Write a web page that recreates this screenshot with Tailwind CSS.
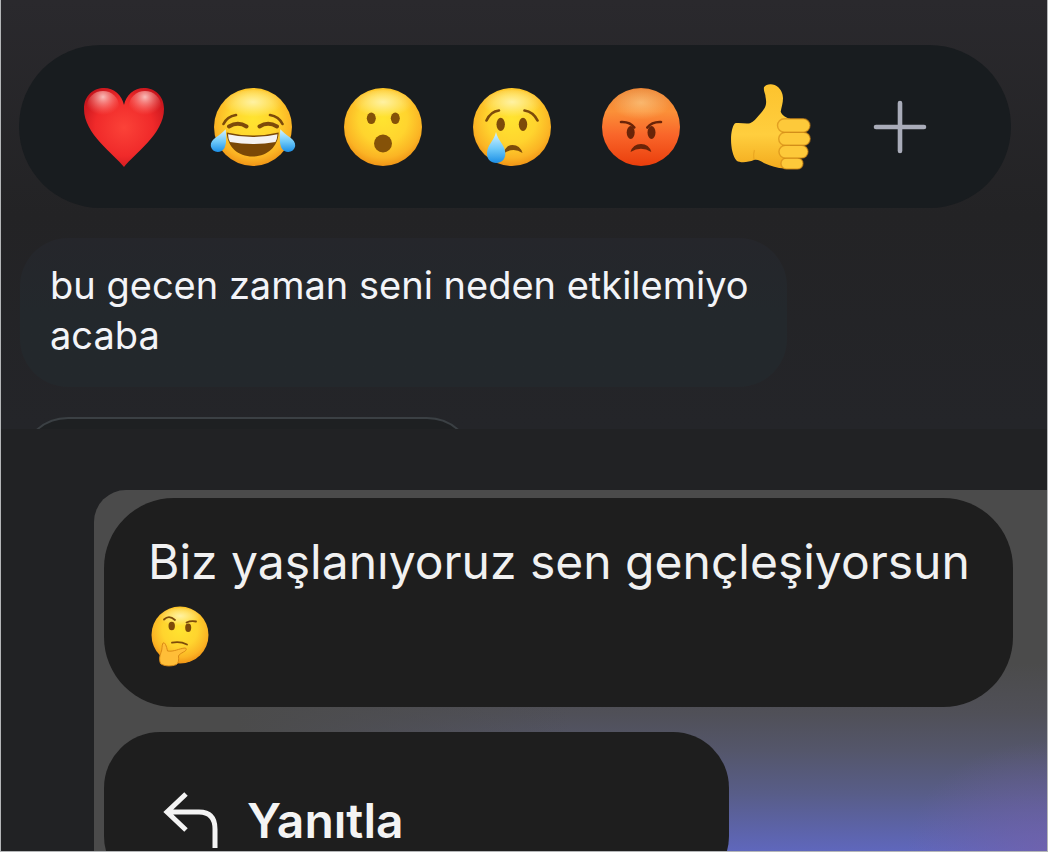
<!DOCTYPE html>
<html lang="tr">
<head>
  <meta charset="UTF-8" />
  <meta name="viewport" content="width=device-width, initial-scale=1" />
  <title>Mesajlar</title>
  <script src="https://cdn.jsdelivr.net/npm/@tailwindcss/browser@4"></script>
</head>
<body class="h-screen flex flex-col overflow-hidden border-x border-b border-[#b4b6b8] bg-[#212224] font-['Inter','Liberation_Sans',sans-serif]">

  <!-- Shared gradients -->
  <svg class="absolute w-0 h-0" aria-hidden="true">
    <defs>
      <radialGradient id="face" cx="0.5" cy="0.4" r="0.62">
        <stop offset="0" stop-color="#ffe430" />
        <stop offset="0.5" stop-color="#ffd42e" />
        <stop offset="0.8" stop-color="#fbb424" />
        <stop offset="1" stop-color="#ee8f14" />
      </radialGradient>
      <radialGradient id="shine" cx="0.5" cy="0.4" r="0.5">
        <stop offset="0" stop-color="#fff8c0" stop-opacity="0.8" />
        <stop offset="1" stop-color="#fff8c0" stop-opacity="0" />
      </radialGradient>
      <linearGradient id="rage" x1="0" y1="0" x2="0" y2="1">
        <stop offset="0" stop-color="#ec8434" />
        <stop offset="0.3" stop-color="#fb9038" />
        <stop offset="0.6" stop-color="#f9662a" />
        <stop offset="1" stop-color="#ea3e0c" />
      </linearGradient>
      <radialGradient id="heart" cx="0.5" cy="0.5" r="0.6">
        <stop offset="0" stop-color="#fb4238" />
        <stop offset="0.6" stop-color="#f02a2a" />
        <stop offset="1" stop-color="#c4141c" />
      </radialGradient>
      <radialGradient id="gloss" cx="0.5" cy="0.2" r="0.6">
        <stop offset="0" stop-color="#ffd8d4" stop-opacity="0.85" />
        <stop offset="1" stop-color="#ff8a80" stop-opacity="0" />
      </radialGradient>
      <linearGradient id="tear" x1="0" y1="0" x2="0" y2="1">
        <stop offset="0" stop-color="#d8f4ff" />
        <stop offset="0.55" stop-color="#6cc8f8" />
        <stop offset="1" stop-color="#1c8fe6" />
      </linearGradient>
      <linearGradient id="hand" x1="0" y1="0" x2="0" y2="1">
        <stop offset="0" stop-color="#fdc32e" />
        <stop offset="0.6" stop-color="#ffce3e" />
        <stop offset="1" stop-color="#f3ab1e" />
      </linearGradient>
    </defs>
  </svg>

  <!-- Reactions and first message -->
  <section aria-label="Tepkiler" class="flex flex-col shrink-0 pt-[45px] bg-linear-to-b from-[#2a292d] via-[#232325] to-[#242529]">
    <div class="ml-[18px] mr-9 h-[163px] rounded-full bg-[#181c1f] flex items-center pl-10 pr-[46px]">
      <button class="flex-1 flex justify-center cursor-pointer" aria-label="Kalp">
        <svg class="w-[86px] h-[86px]" viewBox="0 0 86 86">
          <path fill="url(#heart)" d="M43 83C33 70 3 50 3 25C3 11 13 4 23 4C33 4 41 11 43 21C45 11 53 4 63 4C73 4 83 11 83 25C83 50 53 70 43 83Z" />
          <ellipse cx="22" cy="22" rx="16" ry="15" fill="url(#gloss)" />
          <ellipse cx="64" cy="22" rx="16" ry="15" fill="url(#gloss)" />
        </svg>
      </button>
      <button class="flex-1 flex justify-center cursor-pointer" aria-label="Gülme">
        <svg class="w-[86px] h-[86px]" viewBox="0 0 86 86">
          <circle cx="43" cy="43" r="39" fill="url(#face)" />
          <ellipse cx="43" cy="21" rx="30" ry="15" fill="url(#shine)" />
          <g fill="none" stroke="#7d4b0a" stroke-linecap="round">
            <path stroke-width="2.6" d="M13.5 40Q17 32.5 26 31M60 31Q69 32.5 72.5 40" />
            <path stroke-width="4" d="M19 42.500Q28 37 36.500 42.500M49.500 42.500Q58 37 67 42.500" />
          </g>
          <path fill="#7a4806" d="M16.700 48.500Q43 54.500 68.700 48.500C68 63 57 72.500 42.700 72.500C28 72.500 17.500 63 16.700 48.500Z" />
          <path fill="#f4f2f2" d="M18 50.200Q43 56 67.500 50.200Q67.200 55 65.500 58Q43 62 20 58Q18.200 55 18 50.200Z" />
          <path fill="url(#tear)" d="M15.700 45.300C16.500 54 16.500 60 14.500 64C11 70 2 69 0.800 62C0 55 10 52 15.700 45.300Z" />
          <path fill="url(#tear)" d="M70.300 45.300C69.500 54 69.500 60 71.500 64C75 70 84 69 85.200 62C86 55 76 52 70.300 45.300Z" />
        </svg>
      </button>
      <button class="flex-1 flex justify-center cursor-pointer" aria-label="Şaşkın">
        <svg class="w-[86px] h-[86px]" viewBox="0 0 86 86">
          <circle cx="43" cy="43" r="39" fill="url(#face)" />
          <ellipse cx="43" cy="21" rx="30" ry="15" fill="url(#shine)" />
          <g fill="#855208">
            <ellipse cx="31.300" cy="34.300" rx="4.500" ry="5.800" />
            <ellipse cx="55.300" cy="34.300" rx="4.500" ry="5.800" />
            <circle cx="43" cy="59.500" r="9" />
          </g>
        </svg>
      </button>
      <button class="flex-1 flex justify-center cursor-pointer" aria-label="Üzgün">
        <svg class="w-[86px] h-[86px]" viewBox="0 0 86 86">
          <circle cx="43" cy="43" r="39" fill="url(#face)" />
          <ellipse cx="43" cy="21" rx="30" ry="15" fill="url(#shine)" />
          <g fill="#7d4b0a">
            <ellipse cx="31.700" cy="40.300" rx="4.200" ry="6.600" />
            <ellipse cx="54" cy="40.300" rx="4.200" ry="6.600" />
            <path d="M34 70Q37 61 43.500 61Q51 61 53.500 69Q44 62.500 34 70Z" />
          </g>
          <path fill="none" stroke="#7d4b0a" stroke-width="2.6" stroke-linecap="round" d="M17.500 36.500Q21.500 27.500 30 26.500M55.500 26.500Q64.500 28 68.500 36.500" />
          <path fill="url(#tear)" d="M27 48C29 57 36.300 61 36.300 69.500C36.300 75.500 32.500 79 27.200 79C22 79 18 75.500 18 69.500C18 61 25 57 27 48Z" />
        </svg>
      </button>
      <button class="flex-1 flex justify-center cursor-pointer" aria-label="Kızgın">
        <svg class="w-[86px] h-[86px]" viewBox="0 0 86 86">
          <circle cx="43" cy="43" r="39" fill="url(#rage)" />
          <ellipse cx="43" cy="22" rx="30" ry="17" fill="url(#shine)" opacity="0.5" />
          <g fill="#6a2408">
            <ellipse cx="32.700" cy="48.500" rx="4" ry="6.500" />
            <ellipse cx="53.500" cy="48.500" rx="4" ry="6.500" />
            <path d="M32.500 68Q35 60 43 60Q51 60 53.300 68Q43 61.500 32.500 68Z" />
          </g>
          <path fill="none" stroke="#6a2408" stroke-width="2.6" stroke-linecap="round" d="M23 38Q32 37.500 36.300 43.500M63 38Q54 37.500 49.300 43.500" />
        </svg>
      </button>
      <button class="flex-1 flex justify-center cursor-pointer" aria-label="Beğen">
        <svg class="w-[86px] h-[86px]" viewBox="0 0 86 86">
          <path fill="url(#hand)" d="M7 39.300C12 38.500 17 40 22 39.300C26 37.500 28 34.500 30.300 32C34 28 37.500 24 38 20C38.500 16 37.500 14 37.300 11C36.500 8 35.500 6 36 3.300C38 -0.300 46 -1 50.300 3.300C54 7 55 11 55 14.300C55 19 53.500 23 52.700 27.700C54 31 58 34 62 34.700V84C52 85.500 44 82.500 37 79.500C33 77.500 30 75 26 76C20 78.500 12 79 8.700 76.700C2 70 1 46 7 39.300Z" />
          <path fill="none" stroke="#d98f14" stroke-width="1.400" opacity="0.4" d="M26 76Q25 70 26.500 66" />
          <g fill="#fdc93a" stroke="#cf8412" stroke-width="1.400" stroke-opacity="0.6">
            <rect x="53" y="74" width="22" height="11" rx="5.500" />
            <rect x="51" y="61.300" width="29" height="12.700" rx="6.300" />
            <rect x="50.700" y="48.300" width="31.500" height="13" rx="6.500" />
            <rect x="49.500" y="34.700" width="32.500" height="13.600" rx="6.800" />
          </g>
        </svg>
      </button>
      <button class="flex-1 flex justify-center cursor-pointer" aria-label="Daha fazla">
        <svg class="w-[60px] h-[60px]" viewBox="0 0 60 60" fill="none" stroke="#a9acb9" stroke-width="4.6" stroke-linecap="round">
          <path d="M30 6V54M6 30H54" />
        </svg>
      </button>
    </div>

    <div class="self-start ml-[19px] mt-[30px] pt-[22px] pb-[27px] pl-[30px] pr-[38px] rounded-[48px] bg-linear-to-b from-[#25262b] via-[#23282c] to-[#23282c]">
      <p class="text-[38px] leading-[50px] text-[#f3f4f8]">bu gecen zaman seni neden etkilemiyo<br />acaba</p>
    </div>

    <!-- Top edge of the next bubble -->
    <div class="mt-[30px] h-3 overflow-hidden">
      <div class="ml-[19px] w-[455px] h-24 rounded-[48px] border-2 border-[#3b4044] bg-[#1e2022]"></div>
    </div>
  </section>

  <!-- Second message with its menu -->
  <section aria-label="Mesaj" class="flex-1 min-h-0 flex flex-col pt-[61px] pl-[93px]">
    <div class="flex-1 min-h-0 overflow-hidden rounded-tl-[32px] pt-2 pl-[10px] pr-[34px] bg-[radial-gradient(140px_110px_at_100%_100%,#7560a8aa,transparent),linear-gradient(to_right,#4b4b4b_15%,transparent_50%),linear-gradient(to_bottom,#4b4b4b_48%,#505058_62%,#54566a_72%,#585d88_84%,#5f67bc_100%)]">
      <div class="rounded-[70px] bg-[#1e1e1e] pt-[27px] pb-[34px] pl-11 pr-10">
        <p class="text-[48px] leading-[74px] text-[#f1f1f1] whitespace-nowrap">Biz yaşlanıyoruz sen gençleşiyorsun</p>
        <div class="h-[74px] flex items-center pl-0.5">
          <svg class="w-[60px] h-[62px]" viewBox="0 0 60 62" role="img" aria-label="Düşünen yüz">
            <circle cx="30" cy="30" r="28.500" fill="url(#face)" />
            <ellipse cx="30" cy="13" rx="21" ry="10" fill="url(#shine)" />
            <g fill="#7d4b0a">
              <ellipse cx="21.700" cy="21" rx="3.200" ry="4.200" />
              <ellipse cx="38.200" cy="22.700" rx="3" ry="4.200" />
            </g>
            <path fill="none" stroke="#7d4b0a" stroke-width="1.800" stroke-linecap="round" d="M14 14.500Q19 9.500 25 15M36.500 17.500Q41 15.500 46 16.500M22 37.700Q30 36 37 39.500" />
            <path fill="#ffbe38" stroke="#d98a16" stroke-width="1" d="M13 38C15 37 16.500 41 17.500 46C24 47 29 43.500 35 43C37.500 43.500 36 46 33.500 47C31 48.500 29 49.500 28.500 51C29 55 28.500 58 26.500 59.500C22 61.500 14 61.500 10.500 58.500C9 55 9.500 51 11 47.500C12.500 44 11.500 41 13 38Z" />
          </svg>
        </div>
      </div>

      <div role="menu" class="mt-[25px] mr-[284px] pt-[58px] pb-10 pl-[58px] rounded-[56px] bg-[#1e1e1e]">
        <button role="menuitem" class="flex items-center gap-[27px] text-[48px] leading-[62px] font-semibold text-[#f4f4f4] cursor-pointer">
          <svg class="w-[58px] h-[60px]" viewBox="0 0 58 60" fill="none" stroke="currentColor" stroke-width="5">
            <path d="M24 3L5 21L24 39M5 21H37Q53 21 53 38V57" />
          </svg>
          Yanıtla
        </button>
      </div>
    </div>
  </section>
</body>
</html>
